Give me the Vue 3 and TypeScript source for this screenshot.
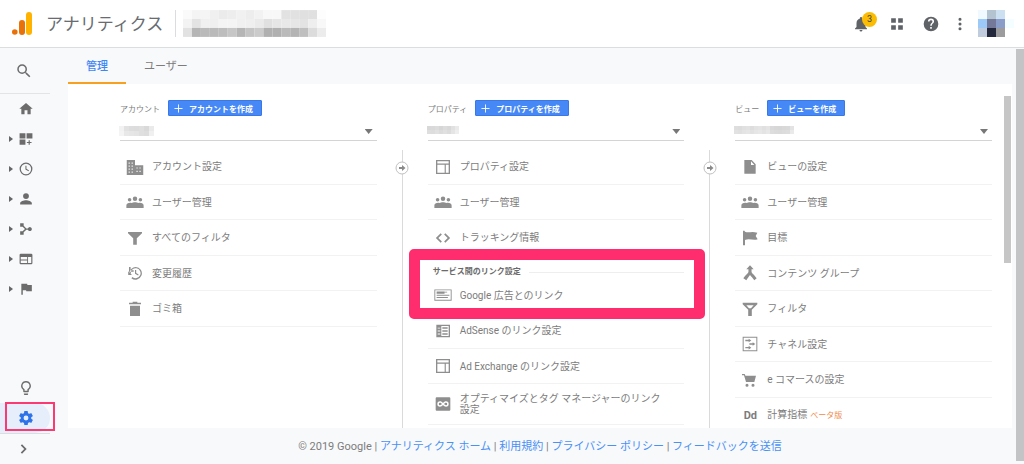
<script setup lang="ts">
import { ref } from 'vue'

interface Shape {
  d: string
  evenodd?: boolean
}
interface Row {
  text: string
  icon: string
  beta?: string
}
interface Mosaic {
  cell: number
  rows: string[][]
}
interface Column {
  id: string
  label: string
  create: string
  mosaic: Mosaic
  rows: Row[]
  linkTitle?: string
  linked?: Row[]
  more?: Row[]
}

const icons: Record<string, Shape> = {
  search: { d: 'M15.5 14h-.79l-.28-.27A6.47 6.47 0 0 0 16 9.5 6.5 6.5 0 1 0 9.5 16c1.61 0 3.09-.59 4.23-1.57l.27.28v.79l5 4.99L20.49 19l-4.99-5zm-6 0C7.01 14 5 11.99 5 9.5S7.01 5 9.5 5 14 7.01 14 9.5 11.99 14 9.5 14z' },
  home: { d: 'M9.500 21v-7h5v7h5.500v-9.500h3.500L12 1.500 .5 11.500H4V21z' },
  dashboard: { d: 'M1 2h10v9H1zM13 2h10v9H13zM1 13h10v9H1zM16.5 14h2v3h3v2h-3v3h-2v-3h-3v-2h3z' },
  clock: { d: 'M12 1a11 11 0 1 0 0 22 11 11 0 0 0 0-22zm0 2.2a8.8 8.8 0 1 1 0 17.600 8.800 8.800 0 0 1 0-17.600zM11 6.500h1.800v5.200l4.400 2.700-.900 1.500L11 12.700z', evenodd: true },
  person: { d: 'M12 12a5 5 0 1 0 0-10 5 5 0 0 0 0 10zm0 2c-4 0-10 1.800-10 5v2.500h20V19c0-3.200-6-5-10-5z' },
  branch: { d: 'M2 2h6v4.500l4.600 4.600h2.600a3.500 3.500 0 1 1 0 2h-2.600L8 17.500V22H2v-6h4.200l4-4-4-4H2z' },
  web: { d: 'M3 3h18a2 2 0 0 1 2 2v14a2 2 0 0 1-2 2H3a2 2 0 0 1-2-2V5a2 2 0 0 1 2-2zm0 5.500V13h11V8.500zm0 6V19h11v-4.500zm12.500-6V19H21V8.500z', evenodd: true },
  flag: { d: 'M14.400 5L14 3H4v19h2.500v-8h5.600l.400 2H22V5z' },
  bulb: { d: 'M9 21c0 .55.45 1 1 1h4c.55 0 1-.45 1-1v-1H9v1zm3-19a7 7 0 0 0-4 12.740V17c0 .55.45 1 1 1h6c.55 0 1-.45 1-1v-2.260A7 7 0 0 0 12 2zm2.850 11.100l-.85.6V16h-4v-2.300l-.85-.6A5 5 0 1 1 14.850 13.100z' },
  gear: { d: 'M19.430 12.980c.040-.320.070-.640.070-.980s-.030-.660-.070-.980l2.110-1.650c.190-.150.240-.420.120-.640l-2-3.460c-.120-.220-.390-.300-.610-.220l-2.490 1c-.520-.400-1.080-.730-1.690-.980l-.380-2.650A.488.488 0 0 0 14 2h-4c-.250 0-.460.180-.490.420l-.380 2.650c-.610.250-1.170.590-1.690.980l-2.490-1c-.230-.090-.490 0-.610.220l-2 3.460c-.130.220-.070.490.120.640l2.110 1.650c-.040.320-.070.650-.070.980s.030.660.070.980l-2.110 1.650c-.190.150-.240.420-.120.640l2 3.460c.120.220.390.300.610.220l2.490-1c.520.400 1.080.730 1.690.980l.380 2.650c.030.240.240.420.490.420h4c.250 0 .460-.180.490-.420l.380-2.650c.610-.250 1.170-.590 1.690-.980l2.490 1c.230.090.490 0 .610-.220l2-3.460c.120-.220.070-.490-.120-.640l-2.110-1.650zM12 15.500a3.500 3.500 0 1 1 0-7 3.500 3.500 0 0 1 0 7z' },
  chevron: { d: 'M8.600 4L6.500 6.100 12.400 12l-5.900 5.900L8.600 20l8-8z' },
  bell: { d: 'M12 22c1.100 0 2-.9 2-2h-4a2 2 0 0 0 2 2zm6-6v-5c0-3.070-1.640-5.640-4.500-6.320V4a1.500 1.500 0 0 0-3 0v.680C7.630 5.360 6 7.920 6 11v5l-2 2v1h16v-1z' },
  apps: { d: 'M2 2h8v8H2zM14 2h8v8h-8zM2 14h8v8H2zM14 14h8v8h-8z' },
  help: { d: 'M12 1a11 11 0 1 0 0 22 11 11 0 0 0 0-22zm1.200 18h-2.400v-2.400h2.400zm2.400-8.600c-1.200 1.300-2.400 1.900-2.400 4.200h-2.400c0-3.600 3.400-4 3.400-6.200a2.200 2.200 0 0 0-4.400 0H7.400a4.600 4.600 0 0 1 9.200 0c0 .8-.4 1.500-1 2z' },
  dots: { d: 'M12 7.200a2.300 2.300 0 1 0 0-4.600 2.300 2.300 0 0 0 0 4.600zm0 7.100a2.300 2.300 0 1 0 0-4.600 2.300 2.300 0 0 0 0 4.600zm0 7.100a2.300 2.300 0 1 0 0-4.600 2.300 2.300 0 0 0 0 4.600z' },
  building: { d: 'M1 2.500h11v7h11v13H1zM3.500 6v1.500H5V6zm4 0v1.500H9V6zM3.500 10v1.500H5V10zm4 0v1.500H9V10zM3.500 14v1.500H5V14zm4 0v1.500H9V14zM3.500 18v1.500H5V18zm4 0v1.500H9V18zM14 12.500V14h1.500v-1.500zm4 0V14h1.500v-1.500zM14 17v1.500h1.500V17zm4 0v1.500h1.500V17z', evenodd: true },
  people: { d: 'M12 4.500a3 3 0 1 0 0 6 3 3 0 0 0 0-6zM4.800 6.500a2.400 2.400 0 1 0 0 4.800 2.400 2.400 0 0 0 0-4.800zM19.200 6.500a2.400 2.400 0 1 0 0 4.800 2.400 2.400 0 0 0 0-4.800zM.5 20v-3.500c0-2.600 3.500-4 7-3.200 2-1.300 7-1.300 9 0 3.500-.8 7 .6 7 3.200V20z' },
  funnel: { d: 'M1.500 3h21v2L14.700 12.500V22H9.300v-9.500L1.500 5z' },
  history: { d: 'M13 3a9 9 0 0 0-9 8.500L1.800 9.300V15H7.500L5.600 13a7.400 7.400 0 1 1 2.600 5l-1.600 1.700A9.500 9.500 0 1 0 13 3zM12 7.500h1.800v4.600l3.700 2.200-.9 1.400L12 13zM3 3h2.400v5H10v2.200H3z' },
  trash: { d: 'M8.500 1h7v1.800H21V5H3V2.800h5.500zM4.500 7h15v15.500h-15z' },
  layout: { d: 'M1.500 1.500h21v21h-21zM3.500 3.500v3.300h17V3.500zM3.500 8.500v12h11v-12zM16.200 8.500v12h4.300v-12z', evenodd: true },
  code: { d: 'M8.500 4.800L10.300 6.600 5 12l5.300 5.400-1.800 1.800L1.300 12zM15.500 4.800L13.700 6.600 19 12l-5.300 5.400 1.800 1.800 7.200-7.200z' },
  ads: { d: 'M.5 4.500h23v15H.5zM1.700 5.700v12.600h20.600V5.700zM3.500 7.200h10.500v3H3.500zM3.500 11.700h17V13h-17zM3.500 14.800h15v1.300h-15zM14 7.500h3.500v1.300H14z', evenodd: true },
  adsense: { d: 'M2 2.500h20.500v19H2zM9.500 4.500v15h11v-15zM11 6.500h8v2h-8zM11 11h8v2h-8zM11 15.500h8v2h-8zM4 7v1.200h4V7zM4 11.400v1.200h4v-1.200zM4 15.900v1.200h4v-1.200z', evenodd: true },
  link: { d: 'M2.500 2h19A1.500 1.500 0 0 1 23 3.500v17a1.500 1.500 0 0 1-1.500 1.500h-19A1.500 1.500 0 0 1 1 20.500v-17A1.500 1.500 0 0 1 2.500 2zM7.500 8a4 4 0 0 0 0 8c1.800 0 3-1 4.500-2.600C13.500 15 14.700 16 16.500 16a4 4 0 0 0 0-8c-1.800 0-3 1-4.500 2.600C10.500 9 9.300 8 7.500 8zm0 2.200c1 0 1.800.8 3 1.800-1.200 1-2 1.800-3 1.800a1.800 1.800 0 0 1 0-3.600zm9 0a1.800 1.800 0 0 1 0 3.600c-1 0-1.800-.8-3-1.800 1.200-1 2-1.800 3-1.800z', evenodd: true },
  page: { d: 'M3.500 1.500h11l6 6.500v14h-17zM13.500 3.500v5.500h5z', evenodd: true },
  goal: { d: 'M1.500 1h2.200l.8 1.500c5 2.500 9-1 18.500 1.500L20.500 9l3 5c-7 2.500-12-2-19 1v8h-3z' },
  merge: { d: 'M12 .5l5.500 6H14.300v3.800c0 2 3.500 4 7.700 9.700L18.500 23c-2.500-3.600-4.600-5.600-6.500-8-1.900 2.400-3.500 4.500-5.500 8L2 20c4-5.500 7.700-7.700 7.700-9.700V6.500H6.500z' },
  filter: { d: 'M1 2.500h22v2.500L14.700 13v9.500H9.300V13L1 5zM6.500 6.500l4 4.200h3l4-4.200z', evenodd: true },
  channel: { d: 'M1 1h22v22H1zM2.500 2.500v19h19v-19zM5 5.700h5V4l4 2.700-4 2.700V7.700H5zM11 11h5V9.300l4 2.700-4 2.700V13h-5zM5 16.500h5v-1.700l4 2.700-4 2.700v-1.700H5z', evenodd: true },
  cart: { d: 'M0 3h4l1.200 2.500H21L18.500 15H6L3 5H0zM7.500 17.500a2.300 2.300 0 1 0 0 4.600 2.300 2.300 0 0 0 0-4.600zM16.500 17.500a2.300 2.300 0 1 0 0 4.600 2.300 2.300 0 0 0 0-4.600z' },
}

const navItems = [
  { icon: 'home', label: 'ホーム', expandable: false },
  { icon: 'dashboard', label: 'カスタム', expandable: true },
  { icon: 'clock', label: 'リアルタイム', expandable: true },
  { icon: 'person', label: 'ユーザー', expandable: true },
  { icon: 'branch', label: '集客', expandable: true },
  { icon: 'web', label: '行動', expandable: true },
  { icon: 'flag', label: 'コンバージョン', expandable: true },
]

const gray = (codes: string): string[] => codes.split(' ').map((c) => '#' + c + c + c)

const headerMosaic: Mosaic = {
  cell: 9,
  rows: [
    gray('fa f4 f5 f0 eb ed f1 ed f2 f8 f8 e2 e1 e0 e0 fd'),
    gray('f3 e3 f0 ef f4 f4 f0 ef ea e0 e6 e8 e6 e3 ee f8'),
    gray('e2 b5 ba ba bd c6 b5 c4 cb b0 b0 ba b4 bf dc ec'),
  ],
}
const avatarMosaic: Mosaic = {
  cell: 9,
  rows: [
    ['#f0f9ff', '#b3c4d0', '#cde0f2', '#ffffff'],
    ['#9cc9f8', '#74799a', '#8a9cc8', '#f4fdff'],
    ['#c0cbde', '#23273c', '#9c9c9e', '#ffffff'],
  ],
}

const columns: Column[] = [
  {
    id: 'account',
    label: 'アカウント',
    create: 'アカウントを作成',
    mosaic: { cell: 5, rows: [gray('f2 e2 dd dc df d9 ea'), gray('f4 e8 e6 e4 df dd f0')] },
    rows: [
      { text: 'アカウント設定', icon: 'building' },
      { text: 'ユーザー管理', icon: 'people' },
      { text: 'すべてのフィルタ', icon: 'funnel' },
      { text: '変更履歴', icon: 'history' },
      { text: 'ゴミ箱', icon: 'trash' },
    ],
  },
  {
    id: 'property',
    label: 'プロパティ',
    create: 'プロパティを作成',
    mosaic: { cell: 4, rows: [gray('d8 d9 dc d6 dc d8 e1 ea'), gray('de dd e1 dc e0 dc e5 ee')] },
    rows: [
      { text: 'プロパティ設定', icon: 'layout' },
      { text: 'ユーザー管理', icon: 'people' },
      { text: 'トラッキング情報', icon: 'code' },
    ],
    linkTitle: 'サービス間のリンク設定',
    linked: [{ text: 'Google 広告とのリンク', icon: 'ads' }],
    more: [
      { text: 'AdSense のリンク設定', icon: 'adsense' },
      { text: 'Ad Exchange のリンク設定', icon: 'layout' },
      { text: 'オプティマイズとタグ マネージャーのリンク設定', icon: 'link' },
    ],
  },
  {
    id: 'view',
    label: 'ビュー',
    create: 'ビューを作成',
    mosaic: {
      cell: 4,
      rows: [gray('de dc e0 e2 dd e2 e4 e0 e4 d9 d7 d6 d8 d9 e3'), gray('e2 e0 e4 e6 e2 e6 e8 e4 e8 dd db da dc dd ea')],
    },
    rows: [
      { text: 'ビューの設定', icon: 'page' },
      { text: 'ユーザー管理', icon: 'people' },
      { text: '目標', icon: 'goal' },
      { text: 'コンテンツ グループ', icon: 'merge' },
      { text: 'フィルタ', icon: 'filter' },
      { text: 'チャネル設定', icon: 'channel' },
      { text: 'e コマースの設定', icon: 'cart' },
      { text: '計算指標', icon: 'Dd', beta: 'ベータ版' },
    ],
  },
]

const wideIcons = ['building', 'people', 'ads']

const sections = (col: Column) =>
  [
    { key: 'main', title: '', rows: col.rows },
    { key: 'linked', title: col.linkTitle ?? '', rows: col.linked ?? [] },
    { key: 'more', title: '', rows: col.more ?? [] },
  ].filter((s) => s.rows.length > 0)

const footerLinks = ['アナリティクス ホーム', '利用規約', 'プライバシー ポリシー', 'フィードバックを送信']
const tabs = ['管理', 'ユーザー']
const activeTab = ref('管理')
</script>

<template>
  <div class="app">
    <header class="topbar">
      <svg class="logo" viewBox="0 0 20 23" aria-hidden="true">
        <rect x="14" y="0" width="6" height="23" rx="3" fill="#ffb300" />
        <rect x="7" y="8" width="6" height="15" rx="3" fill="#e8710a" />
        <circle cx="2.800" cy="20" r="2.800" fill="#e8710a" />
      </svg>
      <h1 class="title">アナリティクス</h1>
      <svg class="picker" viewBox="0 0 144 27" aria-hidden="true">
        <template v-for="(row, y) in headerMosaic.rows" :key="y">
          <rect v-for="(c, x) in row" :key="x" :x="x * 9" :y="y * 9" width="9" height="9" :fill="c" />
        </template>
      </svg>
      <nav class="tools">
        <button type="button" class="tool bell" aria-label="通知">
          <svg class="i18" viewBox="0 0 24 24"><path :d="icons.bell.d" /></svg>
          <span class="badge">3</span>
        </button>
        <button type="button" class="tool" aria-label="アプリ">
          <svg class="i14" viewBox="0 0 24 24"><path :d="icons.apps.d" /></svg>
        </button>
        <button type="button" class="tool" aria-label="ヘルプ">
          <svg class="i16" viewBox="0 0 24 24"><path :d="icons.help.d" /></svg>
        </button>
        <button type="button" class="tool narrow" aria-label="その他">
          <svg class="i16" viewBox="0 0 24 24"><path :d="icons.dots.d" /></svg>
        </button>
        <svg class="avatar" viewBox="0 0 36 27" aria-hidden="true">
          <template v-for="(row, y) in avatarMosaic.rows" :key="y">
            <rect v-for="(c, x) in row" :key="x" :x="x * 9" :y="y * 9" width="9" height="9" :fill="c" />
          </template>
        </svg>
      </nav>
    </header>

    <div class="body">
      <aside class="rail">
        <button type="button" class="rail-search" aria-label="検索">
          <svg class="i18" viewBox="0 0 24 24"><path :d="icons.search.d" /></svg>
        </button>
        <button v-for="item in navItems" :key="item.icon" type="button" class="rail-item" :aria-label="item.label">
          <span class="caret" :class="{ shown: item.expandable }"></span>
          <svg class="i14" viewBox="0 0 24 24">
            <path :d="icons[item.icon].d" :fill-rule="icons[item.icon].evenodd ? 'evenodd' : 'nonzero'" />
          </svg>
        </button>
        <div class="rail-bottom">
          <button type="button" class="rail-item" aria-label="発見">
            <span class="caret"></span>
            <svg class="i14" viewBox="2 2 20 20"><path :d="icons.bulb.d" /></svg>
          </button>
          <button type="button" class="rail-item current" aria-label="管理">
            <span class="caret"></span>
            <svg class="i14" viewBox="2 2 20 20"><path :d="icons.gear.d" /></svg>
            <span class="mark"></span>
          </button>
          <button type="button" class="rail-item expand" aria-label="開く">
            <svg class="i14" viewBox="0 0 24 24"><path :d="icons.chevron.d" /></svg>
          </button>
        </div>
      </aside>

      <main class="main">
        <nav class="tabs">
          <button
            v-for="tab in tabs"
            :key="tab"
            type="button"
            class="tab"
            :class="{ active: tab === activeTab }"
            @click="activeTab = tab"
          >
            {{ tab }}
          </button>
        </nav>

        <div class="panel">
          <div class="columns">
            <template v-for="(col, i) in columns" :key="col.id">
              <div v-if="i > 0" class="divider">
                <svg class="step" viewBox="0 0 14 14" aria-hidden="true">
                  <circle cx="7" cy="7" r="6" fill="#fff" stroke="#c0c0c0" />
                  <path d="M4 6h3V4l3.500 3L7 10V8H4z" fill="#8a8a8a" />
                </svg>
              </div>
              <section class="column">
                <div class="column-head">
                  <label :for="col.id">{{ col.label }}</label>
                  <button type="button" class="create">
                    <svg class="plus" viewBox="0 0 10 10"><path d="M5 .5v9M.5 5h9" /></svg>
                    {{ col.create }}
                  </button>
                </div>
                <div class="picker-row">
                  <select :id="col.id" class="select"><option></option></select>
                  <svg
                    class="value"
                    :width="col.mosaic.rows[0].length * col.mosaic.cell"
                    :height="2 * col.mosaic.cell"
                    aria-hidden="true"
                  >
                    <template v-for="(row, y) in col.mosaic.rows" :key="y">
                      <rect
                        v-for="(c, x) in row"
                        :key="x"
                        :x="x * col.mosaic.cell"
                        :y="y * col.mosaic.cell"
                        :width="col.mosaic.cell"
                        :height="col.mosaic.cell"
                        :fill="c"
                      />
                    </template>
                  </svg>
                  <span class="arrow"></span>
                </div>

                <div class="menu">
                  <div v-for="s in sections(col)" :key="s.key" class="group" :class="s.key">
                    <h2 v-if="s.title" class="group-title">{{ s.title }}</h2>
                    <ul class="rows">
                      <li v-for="row in s.rows" :key="row.text" class="row">
                        <a href="#" class="row-link">
                          <span v-if="row.icon === 'Dd'" class="row-icon letters">Dd</span>
                          <span v-else class="row-icon">
                            <svg :class="wideIcons.includes(row.icon) ? 'i18' : 'i16'" viewBox="0 0 24 24">
                              <path :d="icons[row.icon].d" :fill-rule="icons[row.icon].evenodd ? 'evenodd' : 'nonzero'" />
                            </svg>
                          </span>
                          <span class="row-text">{{ row.text }}<small v-if="row.beta" class="beta">{{ row.beta }}</small></span>
                        </a>
                      </li>
                    </ul>
                    <span v-if="s.title" class="frame"></span>
                  </div>
                </div>
              </section>
            </template>
          </div>
          <span class="thumb"></span>
        </div>

        <footer class="footer">
          <span>© 2019 Google</span>
          <template v-for="link in footerLinks" :key="link"> | <a href="#">{{ link }}</a></template>
        </footer>
      </main>
      <div class="page-scroll"></div>
    </div>
  </div>
</template>

<style>
body {
  margin: 0;
  background: #f8f9fb;
}
</style>

<style scoped>
.app {
  display: flex;
  flex-direction: column;
  height: 100vh;
  overflow: hidden;
  background: #f8f9fb;
  color: #7c7c7c;
  font-family: Roboto, "Noto Sans CJK JP", sans-serif;
  font-size: 10px;
}
.app * {
  box-sizing: border-box;
}
button {
  border: 0;
  padding: 0;
  background: none;
  color: inherit;
  font: inherit;
  cursor: pointer;
}
a {
  color: inherit;
  text-decoration: none;
}
svg {
  display: block;
  flex: none;
  fill: currentColor;
}
.i14 {
  width: 14px;
  height: 14px;
}
.i16 {
  width: 16px;
  height: 16px;
}
.i18 {
  width: 18px;
  height: 18px;
}

.topbar {
  display: flex;
  align-items: center;
  flex: none;
  height: 48px;
  padding: 0 10px 0 12px;
  background: #fff;
  border-bottom: 1px solid #dcdddf;
}
.logo {
  width: 20px;
  height: 23px;
}
.title {
  margin: 0 12px 0 14px;
  color: #686c70;
  font-size: 17px;
  line-height: 24px;
  font-weight: 400;
}
.picker {
  width: 151px;
  height: 27px;
  padding-left: 7px;
  border-left: 1px solid #dadce0;
}
.tools {
  display: flex;
  align-items: center;
  gap: 12px;
  margin-left: auto;
  color: #5f6368;
}
.tool {
  position: relative;
  display: flex;
  align-items: center;
  justify-content: center;
  width: 22px;
  height: 28px;
}
.tool.bell {
  justify-content: flex-start;
}
.tool.narrow {
  width: 12px;
}
.badge {
  position: absolute;
  top: 2px;
  left: 10px;
  width: 15px;
  height: 15px;
  border-radius: 50%;
  background: #fbbc04;
  color: #3c4043;
  font-size: 9px;
  line-height: 15px;
  text-align: center;
}
.avatar {
  width: 36px;
  height: 27px;
}

.body {
  display: flex;
  flex: 1;
  min-height: 0;
}
.rail {
  display: flex;
  flex-direction: column;
  flex: none;
  width: 68px;
  padding-right: 18px;
  color: #6c6c6c;
}
.rail-search {
  height: 46px;
  padding-left: 15px;
  border-bottom: 1px solid #e3e4e6;
}
.rail-item {
  position: relative;
  display: flex;
  align-items: center;
  gap: 6px;
  height: 30px;
  width: 50px;
  padding-left: 9px;
}
.caret {
  width: 4px;
  height: 6px;
}
.caret.shown {
  background: #666;
  clip-path: polygon(0 0, 100% 50%, 0 100%);
}
.rail-bottom {
  margin-top: auto;
}
.current {
  background: #e6eefc;
  border-radius: 0 15px 15px 0;
  color: #2f73e8;
}
.mark {
  position: absolute;
  top: -1px;
  left: 5px;
  width: 50px;
  height: 29px;
  border: 2px solid #fb3a74;
}
.expand {
  height: 31px;
  padding-left: 17px;
  border-top: 1px solid #dcdde0;
}

.main {
  display: flex;
  flex-direction: column;
  flex: 1;
  min-width: 0;
}
.tabs {
  display: flex;
  flex: none;
  height: 36px;
}
.tab {
  padding: 0 18px;
  border-bottom: 2px solid transparent;
  font-size: 11px;
}
.tab.active {
  border-color: #f7a021;
  color: #3f86f5;
  font-weight: 500;
}
.panel {
  position: relative;
  flex: 1;
  min-height: 0;
  overflow: hidden;
  background: #fff;
}
.columns {
  display: grid;
  grid-template-columns: 1fr 51px 1fr 51px 1fr;
  height: 100%;
  padding: 16px 20px 0 52px;
}
.thumb {
  position: absolute;
  top: 12px;
  right: 1px;
  width: 7px;
  height: 167px;
  background: #c6c6c6;
}
.divider {
  display: flex;
  justify-content: center;
  margin-top: 50px;
  padding-top: 11px;
  background: linear-gradient(#dadada, #dadada) center / 1px 100% no-repeat;
}
.step {
  width: 14px;
  height: 14px;
}
.column {
  min-width: 0;
}
.column-head {
  display: flex;
  align-items: center;
  gap: 8px;
  height: 16px;
  font-size: 8px;
}
.create {
  display: flex;
  align-items: center;
  gap: 6px;
  height: 16px;
  padding: 0 8px 0 5px;
  border: 1px solid #3b78e7;
  border-radius: 1px;
  background: #4688f5;
  color: #fff;
  font-weight: 700;
}
.plus {
  width: 9px;
  height: 9px;
  stroke: #fff;
}
.picker-row {
  position: relative;
  height: 25px;
  border-bottom: 1px solid #d4d4d4;
}
.select {
  width: 100%;
  height: 24px;
  border: 0;
  background: none;
  appearance: none;
}
.value {
  position: absolute;
  top: 10px;
  left: -1px;
}
.arrow {
  position: absolute;
  top: 13px;
  right: 4px;
  width: 8px;
  height: 5px;
  background: #777;
  clip-path: polygon(0 0, 100% 0, 50% 100%);
  pointer-events: none;
}
.menu {
  padding-top: 8px;
}
.group {
  position: relative;
}
.rows {
  margin: 0;
  padding: 0;
  list-style: none;
}
.row {
  border-bottom: 1px solid #f2f2f2;
}
.row-link {
  display: flex;
  align-items: center;
  gap: 7px;
  min-height: 35px;
  padding: 9px 20px 9px 5px;
  line-height: 11px;
}
.row:nth-child(even) .row-link,
.linked .row-link {
  min-height: 34px;
}
.row-icon {
  display: flex;
  align-items: center;
  justify-content: center;
  flex: none;
  width: 20px;
  height: 11px;
  color: #8e8e8e;
}
.letters {
  color: #7c7c7c;
  font-size: 11px;
  font-weight: 700;
}
.beta {
  margin-left: 3px;
  color: #f08a4b;
  font-size: 8px;
}
.group-title {
  display: flex;
  align-items: center;
  gap: 8px;
  height: 22px;
  margin: 0;
  padding: 10px 0 0 5px;
  color: #6a6a6a;
  font-size: 8px;
  line-height: 12px;
  font-weight: 700;
}
.group-title::after {
  content: "";
  flex: 1;
  border-top: 1px solid #eee;
}
.frame {
  position: absolute;
  top: -7px;
  right: -21px;
  bottom: -6px;
  left: -19px;
  z-index: 1;
  border: 11px solid #ff2d6d;
  border-radius: 5px;
  pointer-events: none;
}

.footer {
  flex: none;
  height: 36px;
  padding-top: 1px;
  font-size: 11px;
  line-height: 36px;
  text-align: center;
  white-space: nowrap;
}
.footer a {
  color: #4a90f5;
}
.page-scroll {
  flex: none;
  width: 8px;
  margin: 1px 0 3px 4px;
  background: #c3c4c6;
}
</style>
